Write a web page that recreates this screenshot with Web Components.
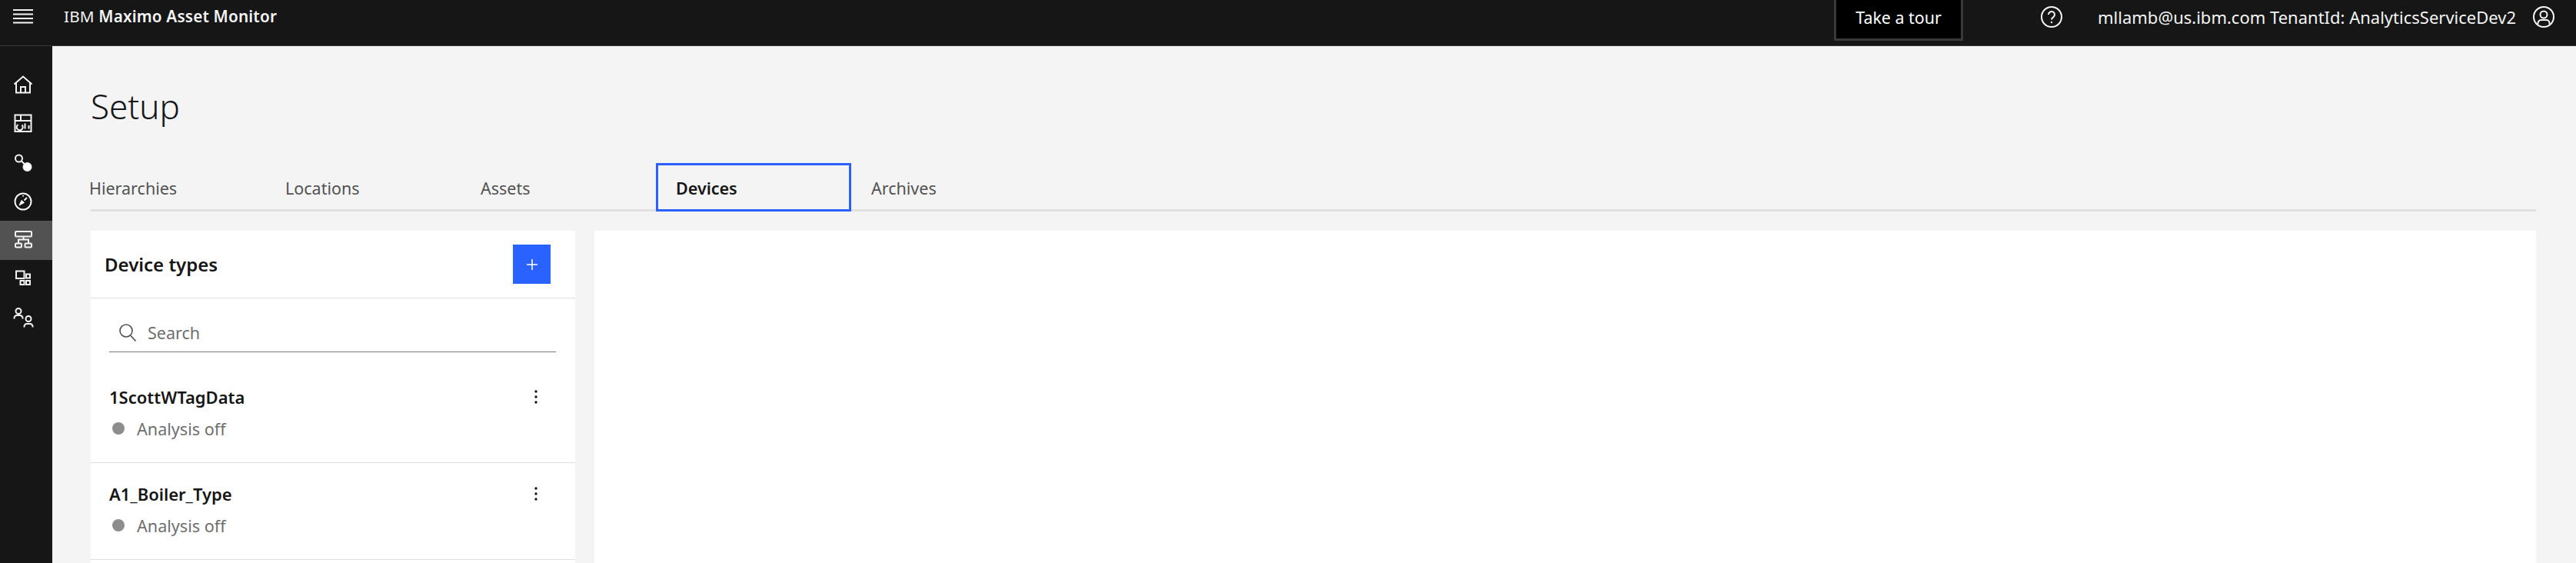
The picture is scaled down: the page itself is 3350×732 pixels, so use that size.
<!DOCTYPE html>
<html>
<head>
<meta charset="utf-8">
<title>Setup</title>
<style>
  html, body { margin: 0; height: 732px; overflow: hidden; background: #f4f4f4; }
  body { font-family: "Noto Sans", "Open Sans", sans-serif; }
</style>
</head>
<body>
<app-shell>
  <top-bar slot="top"></top-bar>
  <side-nav slot="side"></side-nav>
  <setup-page slot="main"></setup-page>
</app-shell>
<script>
const ICONS = {
  home: `<path d="M3.5 15.5 15 5.5l11.5 10"/><path d="M6 14v12.5h18V14"/><path d="M12 26.5V19h6v7.5"/>`,
  dash: `<rect x="4.5" y="4.5" width="21" height="21.5"/><path d="M4.5 12h21M12 4.5V12"/><path d="M13.5 17.5a4 4 0 1 1-5-.5"/><path d="M17.5 15.5v7M22.5 18v4.5" />`,
  node: `<circle cx="9.5" cy="10" r="4.5"/><path d="M13 13.5l6 6"/><circle cx="20.5" cy="21" r="5" fill="#fff"/>`,
  compass: `<circle cx="15" cy="15" r="10.5"/><path d="M10 20l3-6.5 3.5 3z" fill="#fff" stroke-width="1"/><path d="M16.5 13.5l3.5-3.5M15 7v1.5"/>`,
  tree: `<rect x="5" y="4" width="21" height="6.5" rx="1"/><path d="M15.5 10.5v4M9 19v-4.5h13V19"/><rect x="5" y="19.5" width="8" height="5" rx="1"/><rect x="17.5" y="19.5" width="8.5" height="5" rx="1"/>`,
  apps: `<rect x="6" y="4.5" width="10.5" height="9.5"/><rect x="19" y="8.5" width="5" height="5"/><rect x="11.5" y="17" width="5" height="5"/><rect x="19" y="17" width="5" height="5"/>`,
  people: `<circle cx="9" cy="5.5" r="3.5"/><path d="M3.5 15.5v-1a3.5 3.5 0 0 1 3.5-3.5h4a3.5 3.5 0 0 1 3.5 3.5v1"/><circle cx="22" cy="15.5" r="3.5"/><path d="M16.5 26.5v-1a3.5 3.5 0 0 1 3.5-3.5h4a3.5 3.5 0 0 1 3.5 3.5v1"/>`
};

class AppShell extends HTMLElement {
  constructor() {
    super();
    this.attachShadow({ mode: "open" });
    this.shadowRoot.innerHTML = `
      <style>
        :host { display: flex; flex-direction: column; width: 3350px; height: 732px; overflow: hidden; }
        #row { display: flex; flex: 1; min-height: 0; }
        #main { flex: 1; min-width: 0; }
      </style>
      <slot name="top"></slot>
      <div id="row">
        <slot name="side"></slot>
        <div id="main"><slot name="main"></slot></div>
      </div>
    `;
  }
}

class TopBar extends HTMLElement {
  constructor() {
    super();
    this.attachShadow({ mode: "open" });
    this.shadowRoot.innerHTML = `
      <style>
        :host {
          display: flex;
          align-items: flex-start;
          height: 59px;
          background: #161616;
          border-bottom: 1px solid #393939;
          color: #f4f4f4;
          font-size: 22px;
        }
        svg { display: block; fill: none; stroke: #f4f4f4; stroke-width: 2; }
        #menu { margin: 11px 0 0 17px; }
        #title { margin-left: 40px; line-height: 42px; font-size: 20.7px; letter-spacing: .18px; }
        #title b { font-weight: 600; }
        #tour {
          margin-left: auto;
          width: 168px;
          height: 53px;
          box-sizing: border-box;
          background: #000;
          border: solid #393939;
          border-width: 0 3px 3px 3px;
          text-align: center;
          line-height: 45px;
          color: #fff;
          font-size: 21.4px;
        }
        #help { margin: 8px 0 0 101px; }
        #user { margin-left: 46px; line-height: 45px; white-space: nowrap; }
        #avatar { margin: 8px 28px 0 22px; }
      </style>
      <svg id="menu" width="26" height="20" viewBox="0 0 26 20"><path d="M0 2h26M0 7.5h26M0 13h26M0 18.5h26"/></svg>
      <div id="title">IBM <b>Maximo Asset Monitor</b></div>
      <div id="tour">Take a tour</div>
      <svg id="help" width="28" height="28" viewBox="0 0 28 28">
        <circle cx="14" cy="14" r="13"/>
        <path d="M10 11a4 4 0 1 1 6.2 3.3c-1.4.9-2.2 1.6-2.2 3.2"/>
        <circle cx="14" cy="21" r="1.2" fill="#f4f4f4" stroke="none"/>
      </svg>
      <div id="user">mllamb@us.ibm.com TenantId: AnalyticsServiceDev2</div>
      <svg id="avatar" width="28" height="28" viewBox="0 0 28 28">
        <circle cx="14" cy="14" r="13"/>
        <circle cx="14" cy="11" r="4.5"/>
        <path d="M6.5 23.5v-1.5a4 4 0 0 1 4-4h7a4 4 0 0 1 4 4v1.5"/>
      </svg>
    `;
  }
}

class SideNav extends HTMLElement {
  constructor() {
    super();
    this.attachShadow({ mode: "open" });
    const items = ["home", "dash", "node", "compass", "tree", "apps", "people"];
    this.shadowRoot.innerHTML = `
      <style>
        :host { display: block; width: 68px; height: 100%; flex: none; background: #161616; padding-top: 24px; box-sizing: border-box; }
        .item { display: flex; align-items: center; height: 50.75px; padding-left: 15px; box-sizing: border-box; }
        .item.on { background: #525252; }
        svg { display: block; fill: none; stroke: #f4f4f4; stroke-width: 2; }
      </style>
      ${items.map((name) => `
        <div class="item ${name === "tree" ? "on" : ""}">
          <svg width="30" height="30" viewBox="0 0 30 30">${ICONS[name]}</svg>
        </div>`).join("")}
    `;
  }
}

class TabBar extends HTMLElement {
  constructor() {
    super();
    this.attachShadow({ mode: "open" });
    const tabs = ["Hierarchies", "Locations", "Assets", "Devices", "Archives"];
    this.shadowRoot.innerHTML = `
      <style>
        :host { display: flex; height: 63px; box-sizing: border-box; border-bottom: 3px solid #e0e0e0; font-size: 21.5px; color: #525252; }
        .tab { width: 254px; height: 63px; box-sizing: border-box; padding-left: 26px; line-height: 66px; flex: none; }
        .tab:first-of-type { width: 227px; padding-left: 0; text-indent: -2px; }
        .tab.on { border: 3px solid #2962ff; padding-left: 23px; line-height: 60px; color: #161616; font-weight: 600; }
      </style>
      ${tabs.map((t) => `<div class="tab ${t === "Devices" ? "on" : ""}">${t}</div>`).join("")}
    `;
  }
}

class DeviceItem extends HTMLElement {
  constructor() {
    super();
    this.attachShadow({ mode: "open" });
    this.shadowRoot.innerHTML = `
      <style>
        :host { display: block; height: 126px; box-sizing: border-box; border-bottom: 1px solid #e0e0e0; padding: 24px 49px 0 24px; }
        #top { display: flex; justify-content: space-between; align-items: center; height: 32px; }
        #name { font-size: 22px; font-weight: 600; color: #161616; line-height: 30px; }
        #status { display: flex; align-items: center; margin-top: 10px; height: 30px; font-size: 21.6px; color: #6f6f6f; }
        #dot { width: 16px; height: 16px; border-radius: 50%; background: #8d8d8d; margin: 0 16px 0 4px; }
      </style>
      <div id="top">
        <div id="name"><slot></slot></div>
        <svg id="kebab" width="4" height="18" viewBox="0 0 4 18" fill="#161616"><circle cx="2" cy="2" r="1.7"/><circle cx="2" cy="9" r="1.7"/><circle cx="2" cy="16" r="1.7"/></svg>
      </div>
      <div id="status"><span id="dot"></span>Analysis off</div>
    `;
  }
}

class DevicePanel extends HTMLElement {
  constructor() {
    super();
    this.attachShadow({ mode: "open" });
    this.shadowRoot.innerHTML = `
      <style>
        :host { display: block; width: 630px; flex: none; background: #fff; height: 432px; overflow: hidden; }
        #head { display: flex; align-items: center; justify-content: space-between; height: 88px; box-sizing: border-box; border-bottom: 1px solid #e0e0e0; padding: 0 32px 0 18px; }
        h2 { margin: 0; font-size: 24px; font-weight: 600; color: #161616; }
        #add { width: 49px; height: 51px; background: #2962ff; display: flex; align-items: center; justify-content: center; }
        #search { display: flex; align-items: center; margin: 0 25px 0 24px; height: 70px; box-sizing: border-box; border-bottom: 1px solid #7a7a7a; padding: 19px 0 0 13px; font-size: 21.5px; color: #6f6f6f; }
        #search svg { margin-right: 15px; }
        #list { margin-top: 18px; }
      </style>
      <div id="head">
        <h2>Device types</h2>
        <div id="add"><svg width="14" height="14" viewBox="0 0 14 14" stroke="#fff" stroke-width="1.6"><path d="M7 0v14M0 7h14"/></svg></div>
      </div>
      <div id="search">
        <svg width="22" height="23" viewBox="0 0 22 23" fill="none" stroke="#525252" stroke-width="1.6"><circle cx="9" cy="9" r="8"/><path d="M15 15.5l6.5 7"/></svg>
        Search
      </div>
      <div id="list"><slot></slot></div>
    `;
  }
}

class SetupPage extends HTMLElement {
  constructor() {
    super();
    this.attachShadow({ mode: "open" });
    this.shadowRoot.innerHTML = `
      <style>
        :host { display: block; padding: 0 52px 0 50px; box-sizing: border-box; height: 672px; }
        h1 { margin: 0; height: 152px; box-sizing: border-box; padding-top: 48px; font-size: 44px; line-height: 60px; font-weight: 300; color: #161616; }
        #body { display: flex; gap: 25px; margin-top: 25px; }
        #detail { flex: 1; background: #fff; height: 432px; }
      </style>
      <h1>Setup</h1>
      <tab-bar></tab-bar>
      <div id="body">
        <device-panel>
          <device-item>1ScottWTagData</device-item>
          <device-item>A1_Boiler_Type</device-item>
        </device-panel>
        <div id="detail"></div>
      </div>
    `;
  }
}

customElements.define("device-item", DeviceItem);
customElements.define("device-panel", DevicePanel);
customElements.define("tab-bar", TabBar);
customElements.define("setup-page", SetupPage);
customElements.define("side-nav", SideNav);
customElements.define("top-bar", TopBar);
customElements.define("app-shell", AppShell);
</script>
</body>
</html>
